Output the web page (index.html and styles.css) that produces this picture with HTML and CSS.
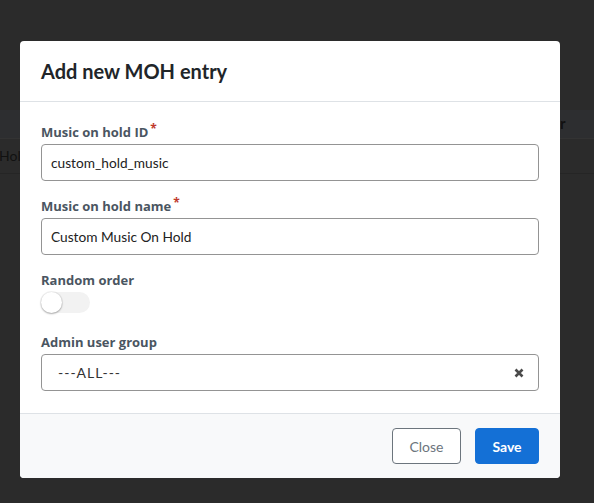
FILE: index.html
```html
<!DOCTYPE html>
<html>
<head>
<meta charset="utf-8">
<link rel="stylesheet" href="styles.css">
</head>
<body>
<div class="page">
  <div class="bg-top"></div>
  <div class="bg-thead"><span class="th-right">r</span></div>
  <div class="bg-row"><span class="td-left">Hold</span></div>
  <div class="modal-wrap">
    <div class="modal">
      <div class="modal-header"><h2 class="title">Add new MOH entry</h2></div>
      <div class="modal-body">
        <div class="field">
          <label class="label">Music on hold ID<span class="req">*</span></label>
          <div class="input">custom_hold_music</div>
        </div>
        <div class="field">
          <label class="label">Music on hold name<span class="req">*</span></label>
          <div class="input">Custom Music On Hold</div>
        </div>
        <div class="field field-toggle">
          <label class="label">Random order</label>
          <div class="toggle"><span class="knob"></span></div>
        </div>
        <div class="field">
          <label class="label">Admin user group</label>
          <div class="input select"><span class="sel-val">---ALL---</span>
            <svg class="clear" width="10" height="10" viewBox="0 0 10 10"><path d="M1.5 1.5 L8.5 8.5 M8.5 1.5 L1.5 8.5" stroke="#4a4a4a" stroke-width="2.6" stroke-linecap="butt"/></svg>
          </div>
        </div>
      </div>
      <div class="modal-footer">
        <button class="btn btn-close">Close</button>
        <button class="btn btn-save">Save</button>
      </div>
    </div>
  </div>
</div>
</body>
</html>
```
FILE: styles.css
```css
* { box-sizing: border-box; }
html, body { margin: 0; padding: 0; }
body {
  background: #2b2b2b;
  font-family: Lato, "Liberation Sans", sans-serif;
  width: 594px;
  height: 503px;
  overflow: hidden;
}
.page { position: relative; width: 594px; height: 503px; background: #2b2b2b; }
.bg-top { height: 110px; }
.bg-thead {
  height: 28px;
  background: #2d2e30;
  position: relative;
}
.th-right {
  position: absolute; left: 560px; top: 4px;
  color: #111; font-weight: 700; font-size: 15px;
}
.bg-row {
  height: 36px;
  border-top: 1px solid #333;
  border-bottom: 1px solid #252525;
  position: relative;
}
.td-left {
  position: absolute; left: -1px; top: 8px;
  color: #111; font-size: 14px;
}
.modal-wrap {
  position: absolute; left: 20px; top: 41px;
  width: 540px;
}
.modal {
  background: #fff;
  border-radius: 4px;
  overflow: hidden;
}
.modal-header {
  height: 61px;
  padding: 18px 21px 0;
  border-bottom: 1px solid #dee2e6;
}
.title {
  margin: 0;
  font-size: 20px;
  font-weight: 700;
  color: #212529;
  line-height: 24px;
}
.modal-body {
  padding: 22px 21px 0;
  height: 311px;
}
.field { margin-bottom: 17px; }
.field-toggle { margin-bottom: 21px; }
.label {
  display: block;
  font-family: "Open Sans", sans-serif;
  font-weight: 700;
  font-size: 13px;
  color: #4a5561;
  line-height: 16px;
  height: 16px;
  margin-bottom: 4px;
}
.req { color: #c0392b; margin-left: 2px; position: relative; top: -4px; font-size: 12px; line-height: 0; }
.input {
  height: 37px;
  border: 1px solid #949494;
  border-radius: 4px;
  padding: 0 9px;
  display: flex;
  align-items: center;
  font-size: 13.7px;
  color: #222;
}
.select { padding: 0 14px 0 16px; justify-content: space-between; }
.sel-val { color: #333; font-size: 14px; letter-spacing: 1px; }
.toggle {
  width: 49px; height: 21px;
  border-radius: 11px;
  background: #f2f2f2;
  position: relative;
}
.knob {
  position: absolute; left: 0; top: 0;
  width: 21px; height: 21px;
  border-radius: 50%;
  background: #fff;
  box-shadow: 0 1px 2px rgba(0,0,0,0.3), 0 0 0 1px rgba(0,0,0,0.05);
}
.modal-footer {
  height: 65px;
  background: #f8f9fa;
  border-top: 1px solid #dee2e6;
  display: flex;
  justify-content: flex-end;
  align-items: flex-start;
  padding: 14px 21px 0;
  gap: 14px;
}
.btn {
  height: 36px;
  border-radius: 4px;
  font-family: Lato, sans-serif;
  font-size: 14px;
  padding: 0;
}
.btn-close {
  width: 69px;
  background: #fff;
  border: 1px solid #6c757d;
  color: #6c757d;
}
.btn-save {
  width: 64px;
  background: #1470d6;
  border: 1px solid #1470d6;
  color: #fff;
  font-weight: 700;
}
```
